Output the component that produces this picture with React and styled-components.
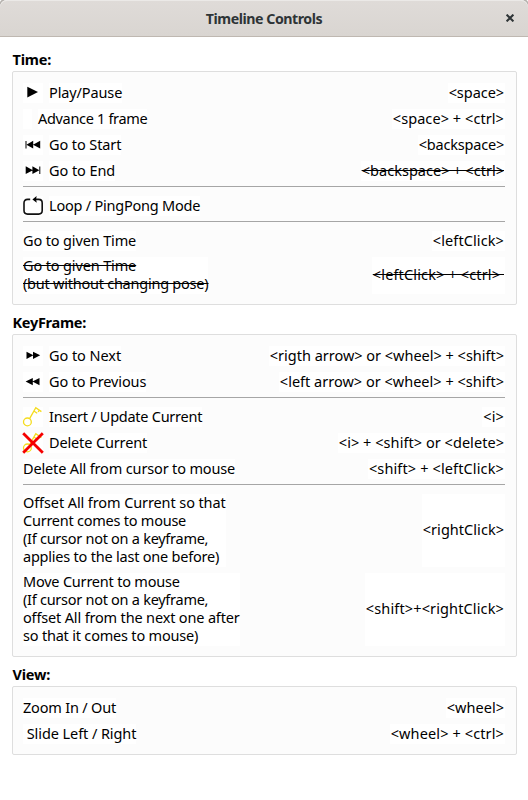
import React from 'react';
import styled, { createGlobalStyle } from 'styled-components';

const GlobalStyle = createGlobalStyle`
  * { box-sizing: border-box; }
  body { margin: 0; background: #fff; }
`;

const Window = styled.div`
  width: 528px;
  height: 800px;
  background: #fff;
  color: #000;
  font-family: 'Noto Sans', sans-serif;
  font-size: 14.5px;
  line-height: 16px;
  overflow: hidden;
`;

const TitleBar = styled.header`
  display: grid;
  grid-template-columns: 36px 1fr 36px;
  align-items: center;
  height: 37px;
  border-top: 1px solid #ebe9e7;
  border-bottom: 1px solid #bfb8b1;
  border-radius: 7px 7px 0 0;
  background: linear-gradient(#dfdbd8, #d9d5d1);
  box-shadow: 0 -1px 0 1px #b5b1ad;
`;

const Title = styled.h1`
  margin: 0;
  text-align: center;
  font-size: 14.2px;
  font-weight: 700;
  letter-spacing: -0.46px;
  color: #2e3436;
`;

const CloseButton = styled.button`
  display: flex;
  align-items: center;
  justify-content: center;
  width: 36px;
  height: 34px;
  padding: 0 0 1px;
  border: 0;
  background: none;
`;

const Content = styled.main`
  display: flex;
  flex-direction: column;
  padding: 14px 11px 0 12px;
`;

const SectionTitle = styled.h2`
  margin: 0;
  height: 20px;
  padding-left: 0.5px;
  font-size: 14.5px;
  font-weight: 700;
  letter-spacing: ${(p) => p.$track}px;
`;

const Group = styled.section`
  display: flex;
  flex-direction: column;
  margin-bottom: 9px;
  padding: 11px 11px 10px 10px;
  border: 1px solid #dedede;
  border-radius: 2px;
  background: #fcfcfc;
`;

const Row = styled.div`
  display: flex;
  justify-content: space-between;
  height: ${(p) => (p.$lines > 1 ? p.$lines * 18 + 1 : 20)}px;

  & + & { margin-top: 6px; }
`;

const Action = styled.div`
  display: flex;
  gap: 6px;
`;

const IconBox = styled.span`
  width: ${(p) => p.$width || 20}px;
  height: 20px;
  background: #fff;

  svg { display: block; overflow: visible; }
`;

const Label = styled.span`
  display: flex;
  flex-direction: column;
  justify-content: center;
  padding-bottom: ${(p) => (p.$tall ? 1 : 0)}px;
  background: #fff;
  white-space: pre;
  text-decoration: ${(p) => (p.$struck ? 'line-through 1px' : 'none')};
`;

const KeysLabel = styled(Label)`
  padding-left: 1px;
  padding-right: 1px;
`;

const Line = styled.span`
  display: block;
  height: 18px;
  letter-spacing: ${(p) => p.$track}px;
  text-decoration: inherit;
`;

const Separator = styled.hr`
  width: 100%;
  height: 1px;
  margin: 5px 0 9px;
  border: 0;
  background: #a6a6a6;
`;

const Svg = ({ children }) => (
  <svg width="20" height="20" viewBox="0 0 20 20" fill="none">{children}</svg>
);

const Key = () => (
  <g stroke="#f5dc1e" strokeWidth="1.3">
    <circle cx="4.4" cy="14.9" r="3.9" />
    <path d="M6.6 11.6 12.8 .8 18.4 4.6M11.2 4.2 14.2 6.2M16.2 3.2 15.2 5" />
  </g>
);

const icons = {
  play: <path d="M4.3 3.8 15 9.1 4.3 14.4Z" fill="#000" />,
  start: (
    <g fill="#000">
      <path d="M2.5 6h1v7.4h-1z" />
      <path d="M10.2 5.8v7.8L3.4 9.7ZM17.2 5.8v7.8L10 9.7Z" />
    </g>
  ),
  end: (
    <g fill="#000">
      <path d="M2.7 5.3v7.8L9.9 9.2ZM9.4 5.3v7.8L16.4 9.2Z" />
      <path d="M16.3 5.4h1V13h-1z" />
    </g>
  ),
  next: <path d="M3.5 5.7v7.2L10.4 9.3ZM10 5.7v7.2L17.2 9.3Z" fill="#000" />,
  previous: <path d="M9.8 6v7.2L2.6 9.6ZM16.5 6v7.2L9.4 9.6Z" fill="#000" />,
  loop: (
    <g>
      <path
        d="M7.2 3.4H4.6Q1 3.4 1 7v7.5q0 3.6 3.6 3.6h11q3.6 0 3.6-3.6V7q0-3.6-3.6-3.6H12"
        stroke="#111"
        strokeWidth="1.6"
      />
      <path d="M9.4 3.4 13.6 0 13.1 3.4 13.8 6.8Z" fill="#000" />
    </g>
  ),
  insert: <Key />,
  remove: (
    <g>
      <Key />
      <path d="M.2.2 19.8 19.8M19.8.2.2 19.8" stroke="#f50000" strokeWidth="2.8" />
    </g>
  ),
};

/* Each text line is a [text, letter-spacing] pair. */
const sections = [
  {
    title: ['Time:', -0.21],
    blocks: [
      [
        { icon: 'play', action: [['Play/Pause', -0.12]], keys: ['<space>', -0.05] },
        { indent: 9, action: [['Advance 1 frame', -0.32]], keys: ['<space> + <ctrl>', 0.07] },
        { icon: 'start', action: [['Go to Start', -0.1]], keys: ['<backspace>', -0.2] },
        { icon: 'end', action: [['Go to End', -0.07]], keys: ['<backspace> + <ctrl>', 0.02], struckKeys: true },
      ],
      [{ icon: 'loop', action: [['Loop / PingPong Mode', -0.22]] }],
      [
        { action: [['Go to given Time', -0.14]], keys: ['<leftClick>', 0.1] },
        {
          action: [['Go to given Time', -0.14], ['(but without changing pose)', -0.24]],
          keys: ['<leftClick> + <ctrl> ', 0.14],
          struck: true,
          struckKeys: true,
        },
      ],
    ],
  },
  {
    title: ['KeyFrame:', -0.28],
    blocks: [
      [
        { icon: 'next', action: [['Go to Next', -0.06]], keys: ['<rigth arrow> or <wheel> + <shift>', -0.01] },
        { icon: 'previous', action: [['Go to Previous', -0.13]], keys: ['<left arrow> or <wheel> + <shift>', 0.01] },
      ],
      [
        { icon: 'insert', action: [['Insert / Update Current', -0.26]], keys: ['<i>', 0.1] },
        { icon: 'remove', action: [['Delete Current', -0.14]], keys: ['<i> + <shift> or <delete>', 0.05] },
        { action: [['Delete All from cursor to mouse', -0.15]], keys: ['<shift> + <leftClick>', 0.13] },
      ],
      [
        {
          action: [
            ['Offset All from Current so that', -0.1],
            ['Current comes to mouse', -0.24],
            ['(If cursor not on a keyframe,', -0.27],
            ['applies to the last one before)', -0.22],
          ],
          keys: ['<rightClick>', 0.04],
        },
        {
          action: [
            ['Move Current to mouse', -0.21],
            ['(If cursor not on a keyframe,', -0.27],
            ['offset All from the next one after', -0.16],
            ['so that it comes to mouse)', -0.2],
          ],
          keys: ['<shift>+<rightClick>', 0.13],
        },
      ],
    ],
  },
  {
    title: ['View:', -0.22],
    blocks: [
      [
        { action: [['Zoom In / Out', -0.19]], keys: ['<wheel>', 0.04] },
        { action: [[' Slide Left / Right', -0.08]], keys: ['<wheel> + <ctrl>', 0.12] },
      ],
    ],
  },
];

const Shortcut = ({ icon, indent, action, keys, struck, struckKeys }) => {
  const tall = action.length > 1;
  return (
    <Row $lines={action.length}>
      <Action>
        {icon && <IconBox><Svg>{icons[icon]}</Svg></IconBox>}
        {indent && <IconBox $width={indent} />}
        <Label $struck={struck} $tall={tall}>
          {action.map(([text, track]) => <Line key={text} $track={track}>{text}</Line>)}
        </Label>
      </Action>
      {keys && (
        <KeysLabel $struck={struckKeys} $tall={tall}>
          <Line $track={keys[1]}>{keys[0]}</Line>
        </KeysLabel>
      )}
    </Row>
  );
};

export default function App() {
  return (
    <Window>
      <GlobalStyle />
      <TitleBar>
        <span />
        <Title>Timeline Controls</Title>
        <CloseButton aria-label="Close">
          <svg width="8" height="8" viewBox="0 0 8 8">
            <path d="M.6.6 7.4 7.4M7.4.6.6 7.4" stroke="#2e3436" strokeWidth="2" />
          </svg>
        </CloseButton>
      </TitleBar>
      <Content>
        {sections.map(({ title, blocks }) => (
          <React.Fragment key={title[0]}>
            <SectionTitle $track={title[1]}>{title[0]}</SectionTitle>
            <Group>
              {blocks.map((rows, b) => (
                <React.Fragment key={b}>
                  {b > 0 && <Separator />}
                  {rows.map((row, r) => <Shortcut key={r} {...row} />)}
                </React.Fragment>
              ))}
            </Group>
          </React.Fragment>
        ))}
      </Content>
    </Window>
  );
}
